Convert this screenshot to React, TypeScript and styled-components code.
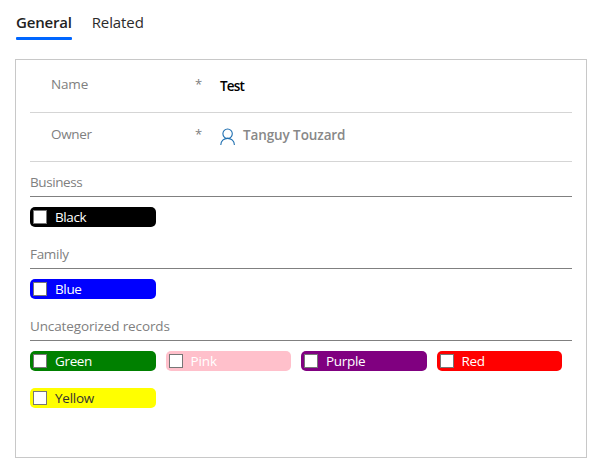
import React from "react";
import styled, { createGlobalStyle } from "styled-components";

const GlobalStyle = createGlobalStyle`
  *, *::before, *::after { box-sizing: border-box; }
  body {
    margin: 0;
    background: #fff;
    font-family: "Open Sans", "Noto Sans", sans-serif;
    font-size: 13.5px;
    color: #808080;
  }
`;

const Page = styled.main`
  width: 599px;
  height: 471px;
  padding: 10px 12px 0 15px;
  overflow: hidden;
`;

const Tabs = styled.nav`
  display: flex;
  gap: 20px;
  height: 49px;
  padding-left: 1px;
`;

const Tab = styled.button<{ $active?: boolean; $tracking: number }>`
  align-self: flex-start;
  height: 30px;
  padding: 0 0 2px;
  border: 0;
  border-bottom: 3px solid transparent;
  background: none;
  position: relative;
  font: ${(p) => (p.$active ? 600 : 400)} 15px/25px "Open Sans", sans-serif;
  letter-spacing: ${(p) => p.$tracking}px;
  white-space: nowrap;
  color: ${(p) => (p.$active ? "#222" : "#2b2b2b")};
  &::after {
    content: "";
    display: ${(p) => (p.$active ? "block" : "none")};
    position: absolute;
    left: 0;
    bottom: -3px;
    width: 56px;
    height: 3px;
    border-radius: 1px;
    background: #0066ff;
  }
`;

const Panel = styled.section`
  width: 572px;
  height: 399px;
  padding: 0 14px;
  border: 1px solid #c8c8c8;
`;

const Field = styled.div<{ $height: number }>`
  display: grid;
  grid-template-columns: 144px 25px 1fr;
  height: ${(p) => p.$height}px;
  padding-left: 21px;
  border-bottom: 1px solid #d5d5d5;
  line-height: 20px;
`;

const Label = styled.span<{ $top: number; $tracking: number }>`
  padding-top: ${(p) => p.$top}px;
  letter-spacing: ${(p) => p.$tracking}px;
`;

const Required = styled(Label)`
  font-size: 13px;
`;

const Value = styled.span<{ $top: number; $color: string; $tracking: number }>`
  display: flex;
  padding-top: ${(p) => p.$top}px;
  font-weight: 600;
  letter-spacing: ${(p) => p.$tracking}px;
  color: ${(p) => p.$color};
`;

const PersonIcon = styled.svg`
  width: 16px;
  height: 18px;
  margin: 3px 7px 0 0;
  fill: none;
  stroke: #1f6fb0;
  stroke-width: 1.1;
`;

const Heading = styled.h2<{ $first?: boolean; $tracking: number }>`
  height: ${(p) => (p.$first ? 35 : 42)}px;
  margin: 0;
  padding-top: ${(p) => (p.$first ? 10 : 17)}px;
  border-bottom: 1px solid #808080;
  font-size: 13.5px;
  font-weight: 400;
  line-height: 20px;
  letter-spacing: ${(p) => p.$tracking}px;
`;

const Chips = styled.div`
  display: grid;
  grid-template-columns: repeat(4, 125.5px);
  column-gap: 10px;
  row-gap: 17px;
  padding-top: 10px;
`;

const Chip = styled.label<{ $bg: string; $fg: string; $tracking: number }>`
  display: flex;
  align-items: center;
  height: 20px;
  padding-left: 3px;
  border-radius: 5px;
  background: ${(p) => p.$bg};
  color: ${(p) => p.$fg};
  font-weight: ${(p) => (p.$fg === "#fff" ? 500 : 400)};
  line-height: 20px;
  letter-spacing: ${(p) => p.$tracking}px;
`;

const Checkbox = styled.input`
  appearance: none;
  width: 14px;
  height: 14px;
  margin: 0 8px 0 0;
  border: 1px solid #767676;
  background: #fff;
`;

type Option = { name: string; color: string; text?: string; tracking: number };
type Group = { title: string; tracking: number; options: Option[] };

const groups: Group[] = [
  { title: "Business", tracking: -0.4, options: [{ name: "Black", color: "black", tracking: -0.4 }] },
  { title: "Family", tracking: -0.3, options: [{ name: "Blue", color: "blue", tracking: -0.35 }] },
  {
    title: "Uncategorized records",
    tracking: -0.13,
    options: [
      { name: "Green", color: "green", tracking: -0.35 },
      { name: "Pink", color: "pink", tracking: -0.1 },
      { name: "Purple", color: "purple", tracking: -0.3 },
      { name: "Red", color: "red", tracking: -0.3 },
      { name: "Yellow", color: "yellow", text: "#333", tracking: -0.25 },
    ],
  },
];

export default function App() {
  return (
    <Page>
      <GlobalStyle />
      <Tabs>
        <Tab $active $tracking={-0.2}>General</Tab>
        <Tab $tracking={-0.1}>Related</Tab>
      </Tabs>
      <Panel>
        <Field $height={53}>
          <Label $top={14} $tracking={-0.15}>Name</Label>
          <Required $top={14} $tracking={0}>*</Required>
          <Value $top={16} $color="#000" $tracking={-0.85}>Test</Value>
        </Field>
        <Field $height={49}>
          <Label $top={11} $tracking={-0.35}>Owner</Label>
          <Required $top={11} $tracking={0}>*</Required>
          <Value $top={12} $color="#888" $tracking={-0.1}>
            <PersonIcon viewBox="0 0 16 18" aria-hidden="true">
              <circle cx="7.6" cy="5.7" r="4.7" />
              <path d="M0.8 17C0.8 13 3.8 10.4 7.6 10.4s6.8 2.6 6.8 6.6" />
            </PersonIcon>
            Tanguy Touzard
          </Value>
        </Field>
        {groups.map((group, index) => (
          <React.Fragment key={group.title}>
            <Heading $first={index === 0} $tracking={group.tracking}>{group.title}</Heading>
            <Chips>
              {group.options.map((option) => (
                <Chip key={option.name} $bg={option.color} $fg={option.text ?? "#fff"} $tracking={option.tracking}>
                  <Checkbox type="checkbox" />
                  {option.name}
                </Chip>
              ))}
            </Chips>
          </React.Fragment>
        ))}
      </Panel>
    </Page>
  );
}
